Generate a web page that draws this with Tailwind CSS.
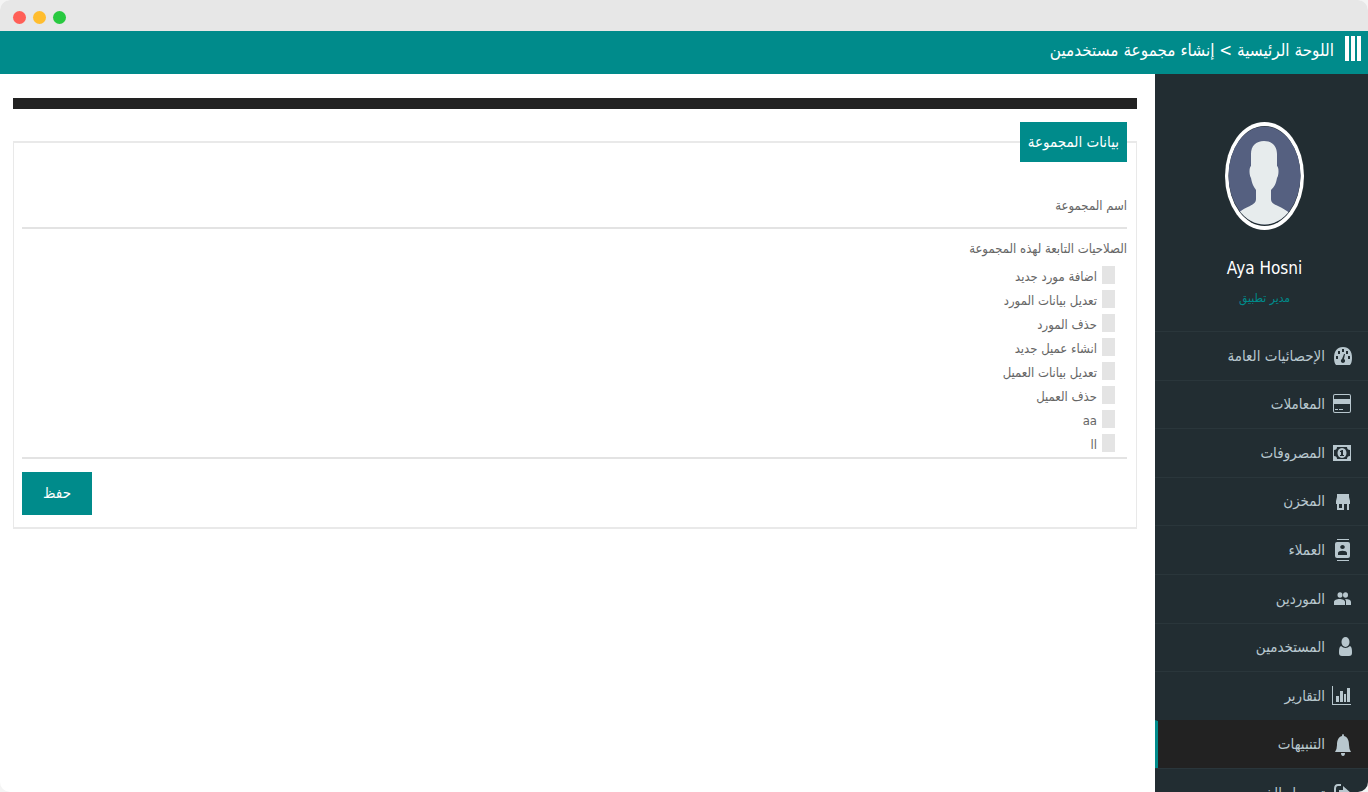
<!DOCTYPE html>
<html lang="ar" dir="rtl">
<head>
<meta charset="utf-8">
<title>إنشاء مجموعة مستخدمين</title>
<script src="https://cdn.jsdelivr.net/npm/@tailwindcss/browser@4"></script>
</head>
<body class="h-screen overflow-hidden bg-[#f4f4f4] font-['DejaVu_Sans_Condensed','DejaVu_Sans',sans-serif]">
<div class="flex h-full flex-col overflow-hidden rounded-[10px] bg-white">
  <div dir="ltr" class="flex h-[31px] shrink-0 items-center gap-[7px] bg-[#e7e7e7] px-[13px] pt-[3px]">
    <span class="size-[13px] rounded-full bg-[#ff5f57]"></span>
    <span class="size-[13px] rounded-full bg-[#ffbd2e]"></span>
    <span class="size-[13px] rounded-full bg-[#28c940]"></span>
  </div>
  <header class="flex h-[43px] shrink-0 items-start gap-[11px] bg-[#008b8b] px-[7px] pt-[5px] text-white">
    <button type="button" aria-label="القائمة" class="flex h-[25px] w-4 shrink-0 justify-between">
      <span class="h-full w-[4px] bg-white"></span><span class="h-full w-[4px] bg-white"></span><span class="h-full w-[4px] bg-white"></span>
    </button>
    <h1 class="whitespace-nowrap text-[17px] leading-7">اللوحة الرئيسية &gt; إنشاء مجموعة مستخدمين</h1>
  </header>
  <div class="flex min-h-0 flex-1">
    <aside class="w-[213px] shrink-0 overflow-hidden bg-[#222d32]">
      <div class="flex h-[257px] flex-col items-center pt-12 pl-[6px]">
        <svg class="h-[108px] w-[79px]" viewBox="0 0 79 108" aria-hidden="true">
          <defs><clipPath id="face"><ellipse cx="39.500" cy="53.500" rx="36" ry="49"/></clipPath></defs>
          <ellipse cx="39.500" cy="54" rx="39.500" ry="54" fill="#fff"/>
          <ellipse cx="39.500" cy="54" rx="36" ry="50" fill="#222d32"/>
          <g clip-path="url(#face)">
            <rect width="79" height="104" fill="#556080"/>
            <path fill="#e7eced" d="M39 19c-8 0-13 5-13 13v12c-2 1-2 9 0 12 1 6 3 9 5 12v9c0 4-3 5-6 7-6 3-11 5-13 9v12h54V92c-4-3-8-6-13-8-4-2-7-3-7-7v-9c3-3 5-6 6-12 2-3 2-11 0-12V32c0-8-5-13-13-13z"/>
          </g>
        </svg>
        <p class="mt-6 text-[17px] leading-7 text-white">Aya Hosni</p>
        <p class="mt-[6px] text-[12px] leading-5 text-[#008b8b]">مدير تطبيق</p>
      </div>
      <nav class="grid h-[486px] auto-rows-fr text-[15px] text-[#b8c7ce]">
        <a href="#" class="flex items-center gap-[7px] border-t border-[#2a363b] pr-4"><svg class="h-5 w-5 shrink-0" viewBox="0 0 20 20" fill="currentColor"><path fill-rule="evenodd" d="M4 19Q2 17 2 12C2 5 5 1 11 1s9 4 9 11q0 5-2 7zM10 3v3h2V3zM6 5v3h2V5zm8 0v3h2V5zM4 10v3h2v-3zm12 0v3h2v-3zm-4-2-2 5c-2 1-1 4 1 4s3-3 1-4l1-5z"/></svg>الإحصائيات العامة</a>
        <a href="#" class="flex items-center gap-[7px] border-t border-[#2a363b] pr-4"><svg class="h-5 w-5 shrink-0" viewBox="0 0 20 20" fill="currentColor"><path fill-rule="evenodd" d="M3 0h14q2 0 2 2v15q0 2-2 2H3q-2 0-2-2V2q0-2 2-2zm0 1q-1 0-1 1v3h16V2q0-1-1-1zm-1 9v7q0 1 1 1h14q1 0 1-1v-7zM3 15h3v1H3zm4 0h4v1H7z"/></svg>المعاملات</a>
        <a href="#" class="flex items-center gap-[7px] border-t border-[#2a363b] pr-4"><svg class="h-5 w-5 shrink-0" viewBox="0 0 20 20" fill="currentColor"><path fill-rule="evenodd" d="M1 2h18v16H1zm4 2q0 3-3 3v6q3 0 3 3h10q0-3 3-3V7q-3 0-3-3zM10 5c6 0 6 10 0 10S4 5 10 5zM8 8v1h1v3H8v1h4v-1h-1V7h-1z"/></svg>المصروفات</a>
        <a href="#" class="flex items-center gap-[7px] border-t border-[#2a363b] pr-4"><svg class="h-5 w-5 shrink-0" viewBox="0 0 20 20" fill="currentColor"><path fill-rule="evenodd" d="M5 2h12v3l1 4v3h-1v6h-2v-6h-3v6H5v-6H4V9l1-4zm2 10v4h3v-4z"/></svg>المخزن</a>
        <a href="#" class="flex items-center gap-[7px] border-t border-[#2a363b] pr-4"><svg class="h-6 w-5 shrink-0" viewBox="0 0 20 24" fill="currentColor"><path fill-rule="evenodd" d="M5 1h12v1H5zm0 21h12v1H5zM5 4h11q2 0 2 2v12q0 2-2 2H5q-2 0-2-2V6q0-2 2-2zm5.500 3c-3 0-3 4 0 4s3-4 0-4zM6 17h9v-2c0-3-9-3-9 0z"/></svg>العملاء</a>
        <a href="#" class="flex items-center gap-[7px] border-t border-[#2a363b] pr-4"><svg class="h-5 w-5 shrink-0" viewBox="0 0 20 20" fill="currentColor"><ellipse cx="8" cy="6" rx="2.500" ry="2.700"/><ellipse cx="13.500" cy="6" rx="2.500" ry="2.700"/><path d="M2 16v-3c0-4 11-4 11 0v3zm12 0v-3q0-2-1-3c4 0 6 1 6 3v3z"/></svg>الموردين</a>
        <a href="#" class="flex items-center gap-[7px] border-t border-[#2a363b] pr-4"><svg class="h-5 w-5 shrink-0" viewBox="0 0 20 20" fill="currentColor"><ellipse cx="13.500" cy="5" rx="4" ry="5"/><path d="M9 9q4.500 4 9 0c2 1 2 4 2 7 0 2-1 3-3 3h-7c-2 0-3-1-3-3 0-3 0-6 2-7z"/></svg>المستخدمين</a>
        <a href="#" class="flex items-center gap-[7px] border-t border-[#2a363b] pr-4"><svg class="h-5 w-5 shrink-0" viewBox="0 0 20 20" fill="currentColor"><path d="M0 0h1v18h18v1H0zM4 10h3v6H4zm4-5h3v11H8zm4 3h2v8h-2zm3-6h3v14h-3z"/></svg>التقارير</a>
        <a href="#" aria-current="page" class="flex items-center gap-[7px] border-t border-l-[3px] border-t-[#222] border-l-[#008b8b] bg-[#222] pr-4"><svg class="h-6 w-5 shrink-0" viewBox="0 0 20 24" fill="currentColor"><path d="M10 3q0-2 1-2t1 2c4 1 5 5 5 9q0 4 2 7H3q2-3 2-7c0-4 1-8 5-9zM9 20h4q0 3-2 3t-2-3z"/></svg>التنبيهات</a>
        <a href="#" class="flex items-center gap-[7px] border-t border-[#2a363b] pr-4"><svg class="h-5 w-5 shrink-0" viewBox="0 0 20 20" fill="currentColor"><path d="M9 1v2H6Q4 3 4 6v8q0 3 2 3h3v2H6q-4 0-4-5V6q0-5 4-5zm2 2 8 7-8 7v-4H7V7h4z"/></svg>تسجيل الخروج</a>
      </nav>
    </aside>
    <main class="min-w-0 flex-1 pt-6 pr-[18px] pl-[13px]">
      <div class="h-[11px] bg-[#222]"></div>
      <form class="mt-[13px] text-[#666]">
        <fieldset class="border-x border-y-2 border-[#e9e9e9] pr-[9px] pl-2 pb-3">
          <legend class="h-10 bg-[#008b8b] px-2 text-[15px] leading-10 text-white">بيانات المجموعة</legend>
          <input type="text" aria-label="اسم المجموعة" placeholder="اسم المجموعة" class="mt-[22px] block h-[45px] w-full border-b-2 border-[#e3e3e3] bg-transparent text-[13px] outline-none placeholder:text-[#666]">
          <p class="mt-2 mb-[2px] text-[13px] leading-6">الصلاحيات التابعة لهذه المجموعة</p>
          <div class="border-b-2 border-[#e3e3e3] pr-3 pb-[2px] text-[13px]">
            <label class="flex h-6 w-fit gap-[5px] leading-7"><input type="checkbox" class="mt-[3px] h-[18px] w-[13px] appearance-none bg-[#e4e4e4] checked:bg-[#008b8b]">اضافة مورد جديد</label>
            <label class="flex h-6 w-fit gap-[5px] leading-7"><input type="checkbox" class="mt-[3px] h-[18px] w-[13px] appearance-none bg-[#e4e4e4] checked:bg-[#008b8b]">تعديل بيانات المورد</label>
            <label class="flex h-6 w-fit gap-[5px] leading-7"><input type="checkbox" class="mt-[3px] h-[18px] w-[13px] appearance-none bg-[#e4e4e4] checked:bg-[#008b8b]">حذف المورد</label>
            <label class="flex h-6 w-fit gap-[5px] leading-7"><input type="checkbox" class="mt-[3px] h-[18px] w-[13px] appearance-none bg-[#e4e4e4] checked:bg-[#008b8b]">انشاء عميل جديد</label>
            <label class="flex h-6 w-fit gap-[5px] leading-7"><input type="checkbox" class="mt-[3px] h-[18px] w-[13px] appearance-none bg-[#e4e4e4] checked:bg-[#008b8b]">تعديل بيانات العميل</label>
            <label class="flex h-6 w-fit gap-[5px] leading-7"><input type="checkbox" class="mt-[3px] h-[18px] w-[13px] appearance-none bg-[#e4e4e4] checked:bg-[#008b8b]">حذف العميل</label>
            <label class="flex h-6 w-fit gap-[5px] leading-7"><input type="checkbox" class="mt-[3px] h-[18px] w-[13px] appearance-none bg-[#e4e4e4] checked:bg-[#008b8b]">aa</label>
            <label class="flex h-6 w-fit gap-[5px] leading-7"><input type="checkbox" class="mt-[3px] h-[18px] w-[13px] appearance-none bg-[#e4e4e4] checked:bg-[#008b8b]">ll</label>
          </div>
          <button type="submit" class="mt-[13px] mr-auto block h-[43px] w-[70px] bg-[#008b8b] text-[15px] text-white">حفظ</button>
        </fieldset>
      </form>
    </main>
  </div>
</div>
</body>
</html>
